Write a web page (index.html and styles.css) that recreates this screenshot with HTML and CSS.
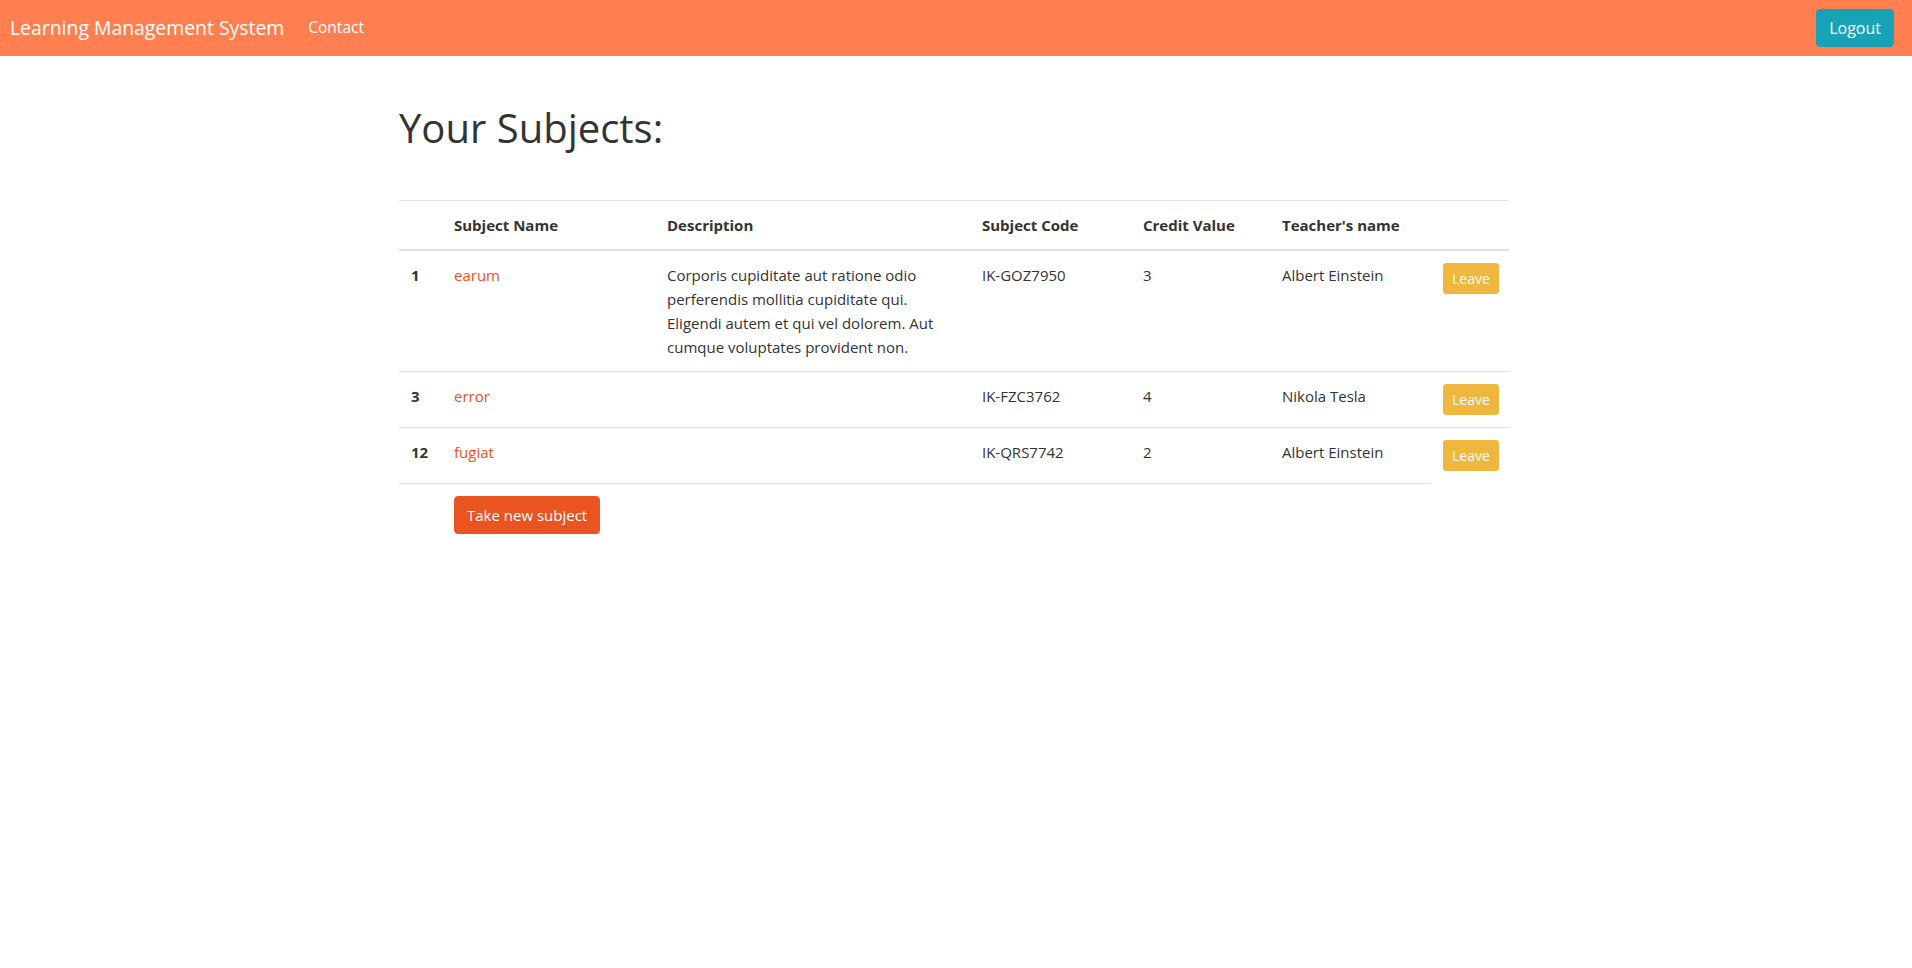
FILE: index.html
```html
<!DOCTYPE html>
<html lang="en">
<head>
<meta charset="utf-8">
<title>Learning Management System</title>
<link rel="stylesheet" href="styles.css">
</head>
<body>
<nav class="navbar">
  <div class="nav-left">
    <a class="brand" href="#">Learning Management System</a>
    <a class="nav-link" href="#">Contact</a>
  </div>
  <button class="btn btn-info">Logout</button>
</nav>
<main class="container">
  <h1 class="title">Your Subjects:</h1>
  <table class="table">
    <colgroup>
      <col class="c-num"><col class="c-name"><col class="c-desc"><col class="c-code"><col class="c-credit"><col class="c-teacher"><col class="c-act">
    </colgroup>
    <thead>
      <tr>
        <th></th><th>Subject Name</th><th>Description</th><th>Subject Code</th><th>Credit Value</th><th>Teacher's name</th><th></th>
      </tr>
    </thead>
    <tbody>
      <tr>
        <th>1</th>
        <td><a href="#">earum</a></td>
        <td>Corporis cupiditate aut ratione odio perferendis mollitia cupiditate qui. Eligendi autem et qui vel dolorem. Aut cumque voluptates provident non.</td>
        <td>IK-GOZ7950</td>
        <td>3</td>
        <td>Albert Einstein</td>
        <td><button class="btn btn-sm btn-warning">Leave</button></td>
      </tr>
      <tr>
        <th>3</th>
        <td><a href="#">error</a></td>
        <td></td>
        <td>IK-FZC3762</td>
        <td>4</td>
        <td>Nikola Tesla</td>
        <td><button class="btn btn-sm btn-warning">Leave</button></td>
      </tr>
      <tr>
        <th>12</th>
        <td><a href="#">fugiat</a></td>
        <td></td>
        <td>IK-QRS7742</td>
        <td>2</td>
        <td>Albert Einstein</td>
        <td><button class="btn btn-sm btn-warning">Leave</button></td>
      </tr>
      <tr class="add-row">
        <td></td>
        <td colspan="5"><button class="btn btn-primary">Take new subject</button></td>
      </tr>
    </tbody>
  </table>
</main>
</body>
</html>
```

FILE: styles.css
```css
* { box-sizing: border-box; }
html, body { margin: 0; }
body {
  font-family: "Open Sans", "Noto Sans", sans-serif;
  font-size: 16px;
  line-height: 1.5;
  color: #333;
  background: #fff;
}
a { color: #e95420; text-decoration: none; }

.navbar {
  height: 56px;
  background: #ff7f50;
  display: flex;
  align-items: center;
  justify-content: space-between;
  padding: 0 18px 0 10px;
}
.nav-left { display: flex; align-items: center; }
.brand {
  color: #fff;
  font-size: 19.4px;
  line-height: 30px;
  margin-right: 16px;
}
.nav-link {
  color: #fff;
  font-size: 15.5px;
  padding: 8px;
}

.btn {
  font-family: inherit;
  border: 1px solid transparent;
  border-radius: 4px;
  color: #fff;
  font-size: 16px;
  line-height: 24px;
  padding: 6px 12px;
  cursor: pointer;
}
.btn-info { background: #17a2b8; border-color: #17a2b8; }
.btn-primary { background: #e95420; border-color: #e95420; }
.btn-warning { background: #efb73e; border-color: #efb73e; }
.btn-sm { font-size: 14px; line-height: 21px; padding: 4px 8px; border-radius: 3px; }

.container {
  width: 1140px;
  margin: 0 auto;
  padding: 0 17px 0 13px;
}
.title {
  font-size: 40px;
  font-weight: 400;
  line-height: 48px;
  margin: 48px 0 48px;
}

.table {
  width: 1110px;
  table-layout: fixed;
  border-collapse: collapse;
}
.c-num { width: 43px; }
.c-name { width: 213px; }
.c-desc { width: 315px; }
.c-code { width: 161px; }
.c-credit { width: 139px; }
.c-teacher { width: 161px; }
.c-act { width: 78px; }
.table th, .table td {
  padding: 12px;
  vertical-align: top;
  text-align: left;
  border-top: 1px solid #dee2e6;
  font-size: 15px;
  line-height: 24px;
}
.table th { font-weight: 700; }
.table thead th {
  vertical-align: bottom;
  border-bottom: 2px solid #dee2e6;
}
.table .btn-sm { font-size: 14px; line-height: 21px; }
.add-row .btn { font-size: 15px; line-height: 24px; }
```
